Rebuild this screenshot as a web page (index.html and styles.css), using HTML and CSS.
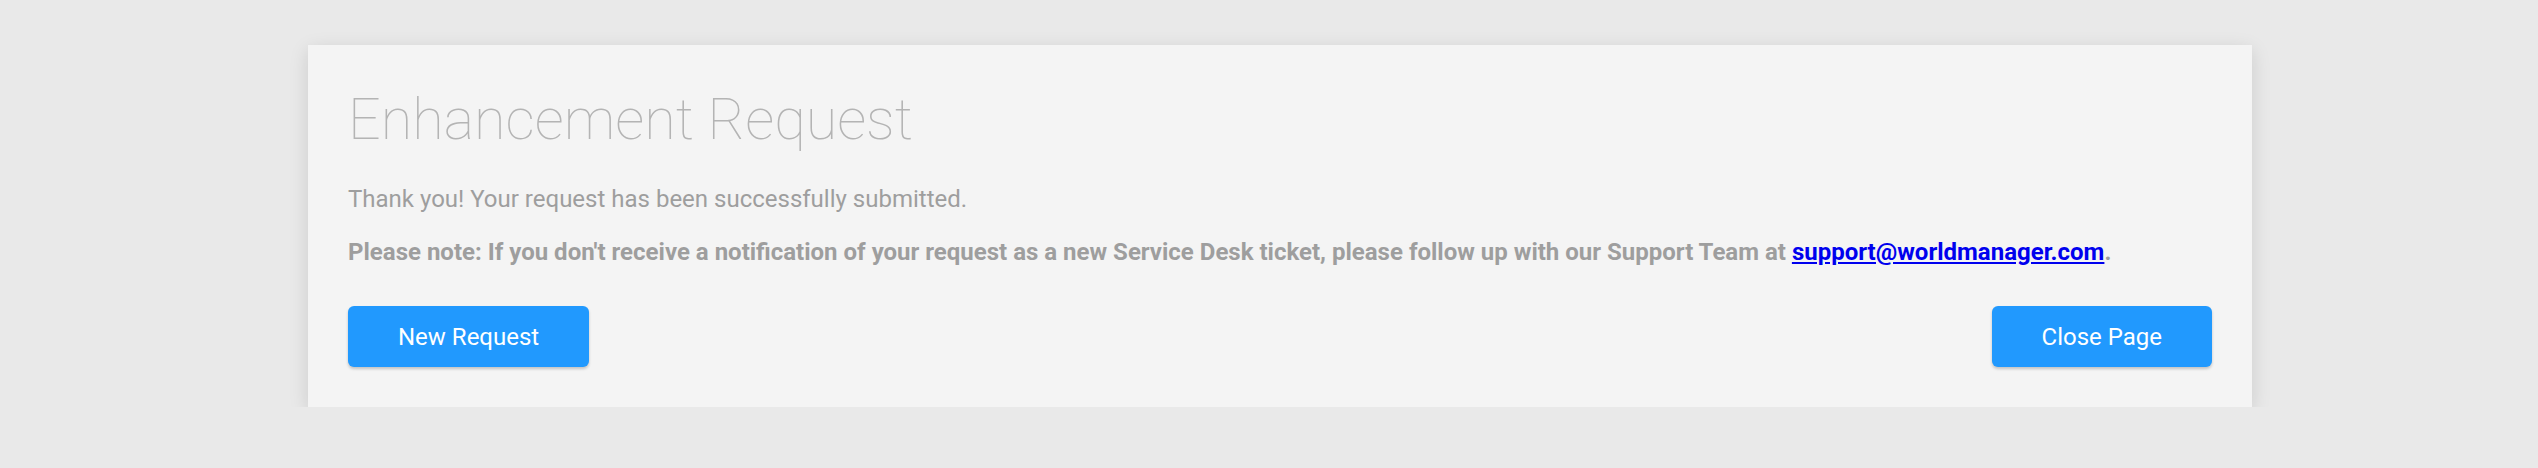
FILE: index.html
```html
<!DOCTYPE html>
<html lang="en">
<head>
<meta charset="UTF-8">
<meta name="viewport" content="width=device-width, initial-scale=1.0">
<title>Enhancement Request</title>
<link rel="stylesheet" href="styles.css">
</head>
<body>

<div class="page">
    <div class="card">
        <h1>Enhancement Request</h1>
        <p>Thank you! Your request has been successfully submitted.</p>
        <p class="note">Please note: If you don't receive a notification of your request as a new Service Desk ticket, please follow up with our Support Team at <a href="mailto:support@worldmanager.com">support@worldmanager.com</a>.</p>
        <div class="actions">
            <button>New Request</button>
            <button>Close Page</button>
        </div>
    </div>
</div>

</body>
</html>
```

FILE: styles.css
```css
body {
    font-family: 'Roboto', 'Liberation Sans', sans-serif;
    margin: 0;
    padding: 0;
    background-color: #e9e9e9;
    color: #9e9e9e;
}
.page {
    padding: 45px 286px 0 308px;
}
.card {
    background: #f4f4f4;
    padding: 40px;
    box-shadow: 0 5px 18px rgba(0, 0, 0, 0.13);
}
h1 {
    font-weight: 100;
    font-size: 57.5px;
    line-height: 70px;
    color: #b4b4b4;
    margin: 0 0 30px;
}
p {
    font-size: 24px;
    line-height: 28px;
    margin: 0 0 25px;
}
.note {
    font-weight: 700;
    margin-bottom: 40px;
}
.note a {
    color: #0000ee;
}
.actions {
    display: flex;
    justify-content: space-between;
}
button {
    font-family: inherit;
    background-color: #2199fe;
    color: white;
    border: none;
    border-radius: 6px;
    height: 61px;
    padding: 0 50px;
    font-size: 24px;
    cursor: pointer;
    box-shadow: 0 2px 3px rgba(0, 0, 0, 0.2);
}
button:hover {
    opacity: 0.8;
}
```
